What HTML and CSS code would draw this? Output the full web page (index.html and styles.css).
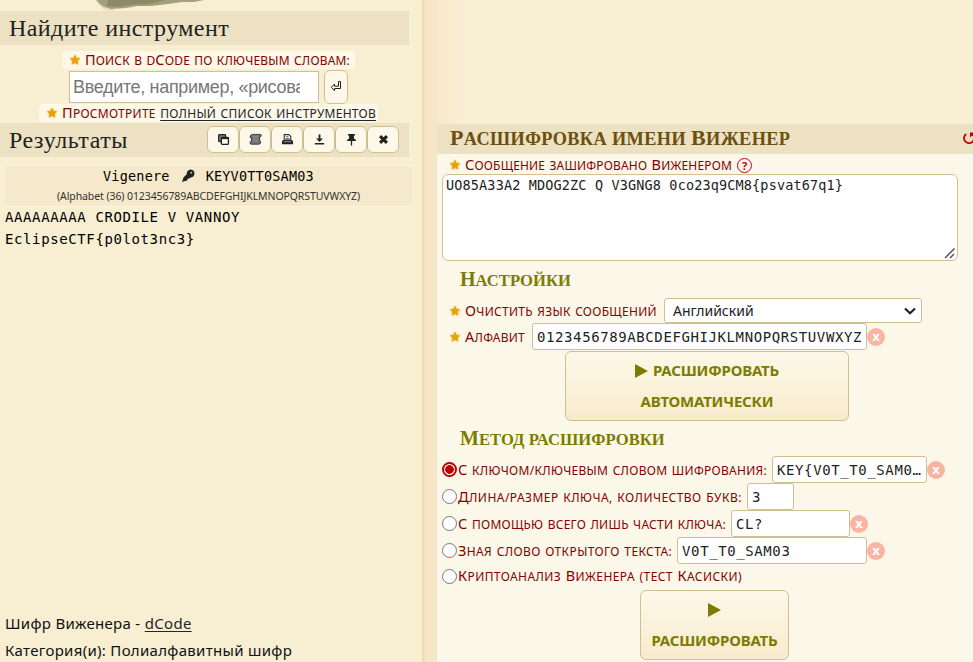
FILE: index.html
```
<!DOCTYPE html>
<html lang="ru">
<head>
<meta charset="utf-8">
<title>Шифр Виженера</title>
<link rel="stylesheet" href="styles.css">
</head>
<body>
<svg width="0" height="0" class="defs">
  <symbol id="star" viewBox="0 0 12 12"><path d="M6 1.2l1.4 3 3.3.4-2.4 2.3.6 3.3L6 8.6l-2.9 1.6.6-3.3L1.3 4.6l3.3-.4z" fill="#e6a20c" stroke="#e6a20c" stroke-width=".7" stroke-linejoin="round"/></symbol>
</svg>
<div class="page">
  <aside class="side">
    <svg class="blot" viewBox="0 0 110 11"><path d="M0 0h108L98 2 86 2 72 4 55 6 41 6 30 8 15 9 8 7 4 4z" fill="#a5a07c"/><path d="M12 0h58L52 4 34 5 23 7 11 6z" fill="#8d8a68"/><path d="M1 1l3 4 5 4 8 1" fill="none" stroke="#c9c29d" stroke-dasharray="2 1"/></svg>
    <h2 class="band find"><span class="t-find">Найдите инструмент</span></h2>
    <div class="hint first"><svg class="star"><use href="#star"/></svg><span class="caps t-search"><em>П</em>оиск в d<em>C</em>ode по ключевым словам:</span></div>
    <div class="search"><div class="query"><span class="t-query">Введите, например, «рисова</span></div><div class="go"><svg viewBox="0 0 12 14"><path d="M8.5 1.5h2v7H4.5v2.2L1.3 7.3 4.5 4v2.2h4z" fill="none" stroke="#222"/></svg></div></div>
    <div class="hint second"><svg class="star"><use href="#star"/></svg><span class="caps t-list"><em>П</em>росмотрите <a>полный список инструментов</a></span></div>
    <div class="band results"><h2><span class="t-res">Результаты</span></h2>
      <div class="tools">
        <i><svg viewBox="0 0 14 14"><rect x="1.7" y="1.7" width="7.6" height="7.6" rx="1" fill="#777" stroke="#222" stroke-width="1.2"/><rect x="4.7" y="4.7" width="7.6" height="7.6" rx="1" fill="#fdf9ea" stroke="#222" stroke-width="1.4"/><path d="M4.5 5.6h8" stroke="#222" stroke-width="2"/></svg></i>
        <i><svg viewBox="0 0 14 14"><path d="M3.500 1.500h8.500q1.500 0 1 2l-1.500.9v5h1.200q-.2 2.600-2 2.600H2.200Q.7 11.800 1.200 9.600l1.500-.4V4.800H1.200Q1 1.800 3.500 1.500z" fill="#777" stroke="#333"/><path d="M4.500 4h5M4.500 6.200h5M4.500 8.400h5" stroke="#8f8f8f"/></svg></i>
        <i><svg viewBox="0 0 14 14"><path d="M3.5 7V1.8h5l2 2V7" fill="#fff" stroke="#333" stroke-width="1.2"/><path d="M5 4h3M5 6h4" stroke="#555"/><path d="M3 7h8l2 2v3H1V9z" fill="#222"/><path d="M3 9.3h8" stroke="#999"/></svg></i>
        <i><svg viewBox="0 0 14 14"><path d="M6 1.500h2v4.500h2.700L7 9.700 3.300 6H6zM2 10.700h10v1.600H2z" fill="#222"/></svg></i>
        <i><svg viewBox="0 0 14 14"><path d="M3.200 1h7.600v1.800H9.600V6q2.200.8 2.400 2.700H7.700V13.500H6.300V8.700H2Q2.200 6.800 4.400 6V2.800H3.200z" fill="#222"/></svg></i>
        <i><svg viewBox="0 0 14 14"><path d="M3.300 3.300l7.400 7.400M10.700 3.300l-7.400 7.400" stroke="#222" stroke-width="3.300"/></svg></i>
      </div>
    </div>
    <div class="answer">
      <div class="line1"><span class="mono t-vig">Vigenere</span><svg viewBox="0 0 14 14"><path d="M1 13l1.500-4.500 3.200-3.300q0-4.200 4-4.700 3.800.5 3.800 4-.3 4-4.300 4.200l-1.700 1-1 .2-.5 1.800-2 .3z" fill="#222"/><circle cx="10.300" cy="3.800" r="1" fill="#c8bca8"/></svg><span class="mono t-key">KEYV0TT0SAM03</span></div>
      <div class="line2"><span class="t-alpha">(Alphabet (36) 0123456789ABCDEFGHIJKLMNOPQRSTUVWXYZ)</span></div>
    </div>
    <div class="plain mono"><div>AAAAAAAAA CRODILE V VANNOY</div><div>EclipseCTF{p0lot3nc3}</div></div>
    <div class="foot"><div>Шифр Виженера - <a>dCode</a></div><div>Категория(и): Полиалфавитный шифр</div></div>
  </aside>
  <div class="gutter"></div>
  <main class="main">
    <div class="top"></div>
    <h2 class="title"><span class="caps"><em>Р</em>асшифровка имени <em>В</em>иженер</span><svg viewBox="0 0 16 16"><path d="M4.200 4A5 5 0 1 0 10.500 4.500" fill="none" stroke="#c00000" stroke-width="1.800"/><path d="M8 2.500h5.500L8 7.500z" fill="#c00000"/></svg></h2>
    <div class="row msg"><svg class="star"><use href="#star"/></svg><span class="caps t-msg"><em>С</em>ообщение зашифровано <em>В</em>иженером</span><b class="help">?</b></div>
    <div class="area mono"><span>UO85A33A2 MDOG2ZC Q V3GNG8 0co23q9CM8{psvat67q1}</span><svg viewBox="0 0 12 12"><path d="M1 11L10.500 1.500M6 11l4-4" stroke="#555" stroke-width="1.500"/></svg></div>
    <h3 class="h-set"><span class="caps"><em>Н</em>астройки</span></h3>
    <div class="row lang"><svg class="star"><use href="#star"/></svg><span class="caps t-lang"><em>О</em>чистить язык сообщений</span><div class="select"><span>Английский</span><svg viewBox="0 0 12 8"><path d="M1 1.500l5 4.800 5-4.800" fill="none" stroke="#222" stroke-width="2.200"/></svg></div></div>
    <div class="row abc"><svg class="star"><use href="#star"/></svg><span class="caps t-abc"><em>А</em>лфавит</span><div class="field mono w-abc"><span>0123456789ABCDEFGHIJKLMNOPQRSTUVWXYZ</span></div><b class="clear">x</b></div>
    <div class="button auto"><div><svg viewBox="0 0 13 14"><path d="M0 0l13 7-13 7z"/></svg><span>РАСШИФРОВАТЬ</span></div><div><span>АВТОМАТИЧЕСКИ</span></div></div>
    <h3 class="h-meth"><span class="caps"><em>М</em>етод расшифровки</span></h3>
    <div class="row opt"><i class="radio on"></i><span class="caps t-o1"><em>С</em> ключом/ключевым словом шифрования:</span><div class="field mono w1"><span>KEY{V0T_T0_SAM0…</span></div><b class="clear">x</b></div>
    <div class="row opt"><i class="radio"></i><span class="caps t-o2"><em>Д</em>лина/размер ключа, количество букв:</span><div class="field mono w2"><span>3</span></div></div>
    <div class="row opt"><i class="radio"></i><span class="caps t-o3"><em>С</em> помощью всего лишь части ключа:</span><div class="field mono w3"><span>CL?</span></div><b class="clear">x</b></div>
    <div class="row opt"><i class="radio"></i><span class="caps t-o4"><em>З</em>ная слово открытого текста:</span><div class="field mono w4"><span>V0T_T0_SAM03</span></div><b class="clear">x</b></div>
    <div class="row opt last"><i class="radio"></i><span class="caps t-o5"><em>К</em>риптоанализ <em>В</em>иженера (тест <em>К</em>асиски)</span></div>
    <div class="button dec"><div><svg viewBox="0 0 13 14"><path d="M0 0l13 7-13 7z"/></svg></div><div><span>РАСШИФРОВАТЬ</span></div></div>
  </main>
</div>
</body>
</html>
```
FILE: styles.css
```
* { box-sizing: border-box; }
body { margin: 0; background: #f8eed2; color: #111; font: 15px/20px "Noto Sans", sans-serif; overflow: hidden; }
h2, h3 { margin: 0; font-family: "Liberation Serif", serif; font-weight: normal; }
a { text-decoration: underline; text-underline-offset: 2px; color: #23252b; }
span { white-space: pre; }
.caps { font-size: 12px; text-transform: uppercase; }
.caps em { font-style: normal; font-size: 14.5px; }
.hint .caps, .row .caps { word-spacing: 1px; }
.defs { position: absolute; }
.mono { font-family: "DejaVu Sans Mono", monospace; font-size: 14px; }
.page { display: flex; width: 973px; height: 662px; overflow: hidden; }
.side { width: 422px; flex: none; display: flex; flex-direction: column; background: #f8eed2; position: relative; }
.blot { position: absolute; left: 96px; top: 0; width: 110px; height: 11px; }
.band { width: 409px; height: 34px; background: #ece1c3; padding-left: 9px; flex: none; display: flex; align-items: center; font-size: 24px; line-height: 34px; color: #222; }
.band h2 { font-size: 24px; }
.t-find { letter-spacing: .41px; }
.t-res { letter-spacing: .57px; }
.find { margin-top: 11px; }
.star { width: 12px; height: 12px; flex: none; filter: drop-shadow(0 0 1px #f6c95d); }
.hint { align-self: flex-start; height: 18px; background: #fdf8e8; border-radius: 4px; display: flex; align-items: center; color: #870000; flex: none; line-height: 18px; }
.hint .star { margin: 0 4px 0 7px; }
.first { margin: 6px 0 0 62px; width: 293px; }
.second { margin: 0 0 0 39px; width: 339px; }
.search { display: flex; height: 34px; margin: 1px 0 0 69px; flex: none; align-items: center; }
.query { width: 250px; height: 32px; border: 1px solid #d2bf90; background: #fff; padding-left: 3px; font: 18px/30px "Liberation Sans", sans-serif; color: #777; }
.query span { display: block; width: 227px; overflow: hidden; letter-spacing: -.33px; }
.go { width: 24px; height: 34px; margin-left: 5px; border: 1px solid #d2bf90; border-radius: 6px; background: #fdf8e8; display: flex; align-items: center; justify-content: center; }
.go svg { width: 12px; height: 14px; }
.results { margin-top: 1px; justify-content: space-between; padding-right: 10px; }
.tools { display: flex; margin-bottom: 2px; }
.tools i { width: 32px; height: 27px; border: 1px solid #d2bf90; border-radius: 6px; background: #fdf9ea; display: flex; align-items: center; justify-content: center; }
.tools svg { width: 13px; height: 13px; }
.answer { width: 407px; height: 42px; margin: 8px 0 0 5px; background: #f6e8ca; border: solid #fcf6e6; border-width: 1px 0; flex: none; }
.line1 { display: flex; height: 20px; align-items: center; padding-left: 98px; color: #000; }
.line1 svg { width: 14px; height: 14px; margin: 0 11px; }
.mono.t-vig, .mono.t-key { font-size: 13.5px; letter-spacing: .2px; }
.line2 { display: flex; height: 20px; align-items: center; padding-left: 52px; font-size: 10.5px; letter-spacing: -.09px; color: #333; }
.plain { margin: -1px 0 0 5px; color: #000; line-height: 22px; letter-spacing: .61px; }
.foot { margin: auto 0 -2px 5px; line-height: 27px; font-size: 15px; letter-spacing: .3px; }
.gutter { width: 15px; flex: none; background: linear-gradient(90deg, #ecd9af 0, #f5e5c4 4px, #f6e7ca 14px, #f1e4c8 15px); }
.main { width: 536px; flex: none; background: #fcf8e9; display: flex; flex-direction: column; }
.top { height: 124px; background: linear-gradient(90deg, #f8eaca, #f8eed2 25px); flex: none; }
.title { height: 30px; background: #ece1c3; padding: 0 0 2px 13px; display: flex; justify-content: space-between; align-items: center; font-weight: bold; color: #6b500e; flex: none; }
.title .caps { font-size: 18.3px; letter-spacing: .38px; }
.title .caps em { font-size: 22px; }
.title svg { width: 16px; height: 16px; margin-right: -5px; }
.row { display: flex; align-items: center; height: 27px; flex: none; color: #870000; }
.row > .star { margin: 0 4px 0 12px; }
.row.msg { height: 20px; padding-top: 1px; }
.row.msg .help { margin-top: 2px; }
.t-search { letter-spacing: .17px; }
.t-list { letter-spacing: .27px; }
.t-msg { letter-spacing: .18px; }
.t-lang { letter-spacing: .29px; }
.t-abc { letter-spacing: .25px; }
.t-o1 { letter-spacing: .29px; }
.t-o2 { letter-spacing: .46px; }
.t-o3 { letter-spacing: .26px; }
.t-o4 { letter-spacing: .39px; }
.t-o5 { letter-spacing: .42px; }
.help { width: 15px; height: 15px; border: 1px solid #c00020; border-radius: 50%; margin-left: 5px; font-size: 11px; line-height: 13px; text-align: center; color: #c00020; flex: none; }
.area { position: relative; margin-left: 5px; width: 516px; height: 87px; border: 1px solid #d2bf90; border-radius: 6px; background: #fff; padding: 0 3px; font-size: 13.5px; line-height: 20px; color: #222; flex: none; letter-spacing: .145px; }
.area svg { position: absolute; right: 1px; bottom: 1px; width: 12px; height: 12px; }
h3 { font-weight: bold; color: #7c7c00; line-height: 36px; height: 36px; padding-left: 23px; flex: none; }
h3 .caps { font-size: 16.6px; letter-spacing: .05px; }
h3 .caps em { font-size: 20px; }
.row.lang { height: 25px; margin-top: 1px; }
.h-set { height: 36px; }
.select { margin-left: auto; margin-right: 51px; width: 258px; height: 25px; border: 1px solid #d2bf90; border-radius: 3px; background: #fff; display: flex; align-items: center; justify-content: space-between; padding: 0 5px 0 8px; font-size: 14px; color: #222; }
.select svg { width: 12px; height: 8px; }
.field { height: 27px; border: 1px solid #d2bf90; border-radius: 3px; background: #fff; display: flex; align-items: center; padding-left: 4px; color: #222; overflow: hidden; flex: none; letter-spacing: .6px; }
.w-abc { width: 335px; margin-left: 7px; }
.clear { width: 18px; height: 18px; border-radius: 50%; background: #f9b4a4; color: #fff; text-align: center; font-size: 13px; line-height: 16px; flex: none; }
.button { border: 1px solid #d2bf90; border-radius: 6px; background: linear-gradient(#fcf8e8, #f7ebce); height: 70px; padding-top: 3px; flex: none; color: #7c7c00; font-weight: bold; font-size: 15px; line-height: 31px; letter-spacing: -.19px; }
.button div { display: flex; justify-content: center; align-items: center; gap: 5px; height: 31px; }
.button svg { width: 13px; height: 14px; fill: #7c7c00; }
.auto { width: 284px; margin: 1px 0 -1px 128px; }
.opt { padding-left: 5px; }
.radio { width: 15px; height: 15px; border: 1px solid #777; border-radius: 50%; background: #fff; margin-right: 1px; flex: none; }
.radio.on { border: 2px solid #c00000; background: radial-gradient(#c00000 4px, #fff 4.6px); }
.w1 { width: 155px; margin-left: 5px; }
.w2 { width: 47px; margin-left: 5px; }
.w3 { width: 119px; margin-left: 5px; }
.w4 { width: 190px; margin-left: 5px; }
.opt.last { height: 24px; }
.dec { width: 149px; margin: 2px 0 0 203px; }
```
